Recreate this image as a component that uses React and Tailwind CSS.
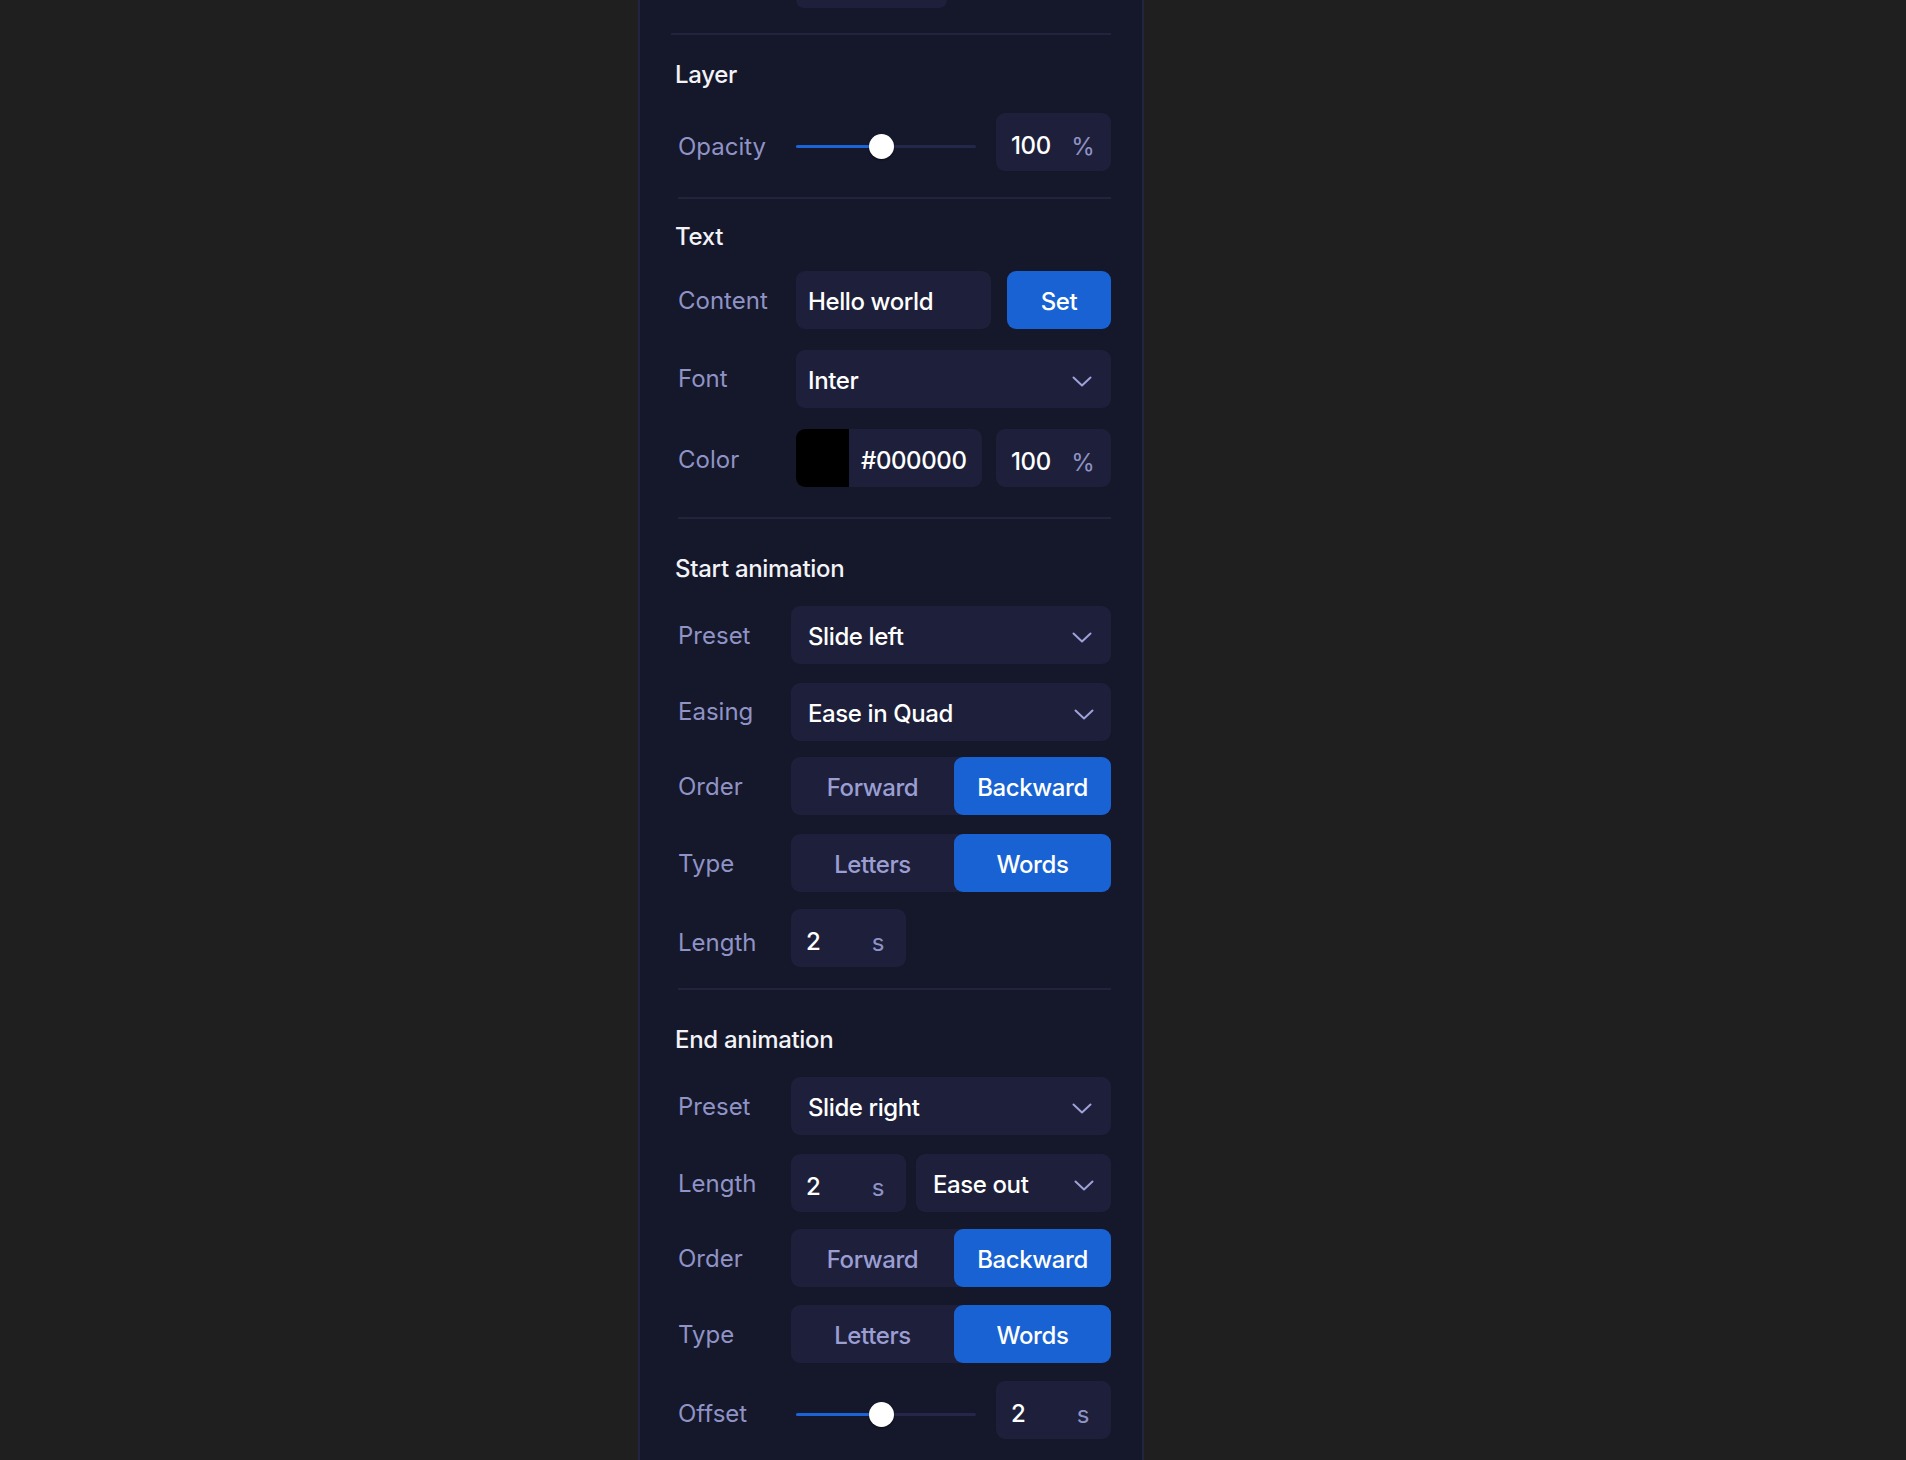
import React from "react";

const FONT = { fontFamily: "Inter, 'Noto Sans', sans-serif" };
const VAL = "text-[24px] font-medium leading-[32px] tracking-[-0.4px] text-white";

function Chevron({ className = "" }) {
  return (
    <svg width="20" height="11" viewBox="0 0 20 11" className={className} fill="none">
      <polyline points="1.5,1.5 10,9.5 18.5,1.5" stroke="#9ea2d8" strokeWidth="2" strokeLinecap="round" strokeLinejoin="round" />
    </svg>
  );
}

function Divider({ className = "" }) {
  return <div className={`h-[2px] shrink-0 bg-[#22243d] ${className}`} />;
}

function Heading({ children, className = "" }) {
  return (
    <div className={`h-[32px] shrink-0 pl-[2px] text-[24px] font-medium leading-[32px] tracking-[-0.3px] text-[#f3f3f7] ${className}`}>
      {children}
    </div>
  );
}

function Row({ label, labelW = "w-[123px]", labelShift = "translate-y-[1px]", className = "", children }) {
  return (
    <div className={`flex h-[58px] shrink-0 items-center ${className}`}>
      <div className={`${labelW} shrink-0 pl-[5px] text-[24px] leading-[32px] text-[#8f93c6] ${labelShift}`}>{label}</div>
      {children}
    </div>
  );
}

function NumberInput({ value, unit, className = "" }) {
  return (
    <div className={`flex h-[58px] w-[115px] shrink-0 items-center rounded-[9px] bg-[#1e1f3a] ${className}`}>
      <span className={`flex-1 translate-y-[4px] pl-[15px] ${VAL}`}>{value}</span>
      <span className="w-[56px] translate-y-[5px] text-center text-[24px] leading-[32px] text-[#8f93c6]">{unit}</span>
    </div>
  );
}

function Select({ value, className = "", pl = "pl-[12px]", pr = "pr-[19px]" }) {
  return (
    <div className={`flex h-[58px] items-center justify-between rounded-[9px] bg-[#1e1f3a] ${pl} ${pr} ${className}`}>
      <span className={`translate-y-[2px] ${VAL}`}>{value}</span>
      <Chevron className="translate-y-[2px]" />
    </div>
  );
}

function Segmented({ left, right }) {
  return (
    <div className="flex h-[58px] flex-1 rounded-[9px] bg-[#1e1f3a]">
      <div className="flex w-[163px] items-center justify-center text-[24px] font-medium leading-[32px] tracking-[-0.4px] text-[#9a9ed2]">
        <span className="translate-y-[2px]">{left}</span>
      </div>
      <div className={`flex flex-1 items-center justify-center rounded-[9px] bg-[#1862d3] ${VAL}`}>
        <span className="translate-y-[2px]">{right}</span>
      </div>
    </div>
  );
}

function Slider() {
  return (
    <div className="relative h-[25px] w-[200px] shrink-0 translate-y-[4px]">
      <div className="absolute left-0 top-[11px] h-[3px] w-[180px] rounded-full bg-[#24274a]" />
      <div className="absolute left-0 top-[11px] h-[3px] w-[86px] rounded-full bg-[#1b63d6]" />
      <div className="absolute left-[73px] top-0 h-[25px] w-[25px] rounded-full bg-white shadow-[0_1px_2px_rgba(0,0,0,0.45)]" />
    </div>
  );
}

export default function App() {
  return (
    <div className="h-[1460px] overflow-hidden bg-[#1f1f1f] pl-[638px]" style={FONT}>
      <div className="flex min-h-[1460px] w-[506px] flex-col border-x-2 border-[#22253f] bg-[#15172a] pl-[33px] pr-[31px]">
        <div className="ml-[123px] h-[8px] w-[151px] shrink-0 rounded-b-[9px] bg-[#1e1f3a]" />
        <Divider className="mt-[25px] -ml-[2px]" />

        <Heading className="mt-[24px]">Layer</Heading>
        <Row label="Opacity" labelShift="translate-y-[5px]" className="mt-[22px]">
          <Slider />
          <NumberInput value="100" unit="%" />
        </Row>

        <Divider className="mt-[26px] ml-[5px]" />

        <Heading className="mt-[22px]">Text</Heading>
        <Row label="Content" className="mt-[18px]">
          <div className={`flex h-[58px] w-[195px] shrink-0 items-center rounded-[9px] bg-[#1e1f3a] pl-[12px] ${VAL}`}>
            <span className="translate-y-[2px]">Hello world</span>
          </div>
          <div className={`ml-[16px] flex h-[58px] flex-1 items-center justify-center rounded-[9px] bg-[#1862d3] ${VAL}`}>
            <span className="translate-y-[2px]">Set</span>
          </div>
        </Row>
        <Row label="Font" labelShift="translate-y-[0px]" className="mt-[21px]">
          <Select value="Inter" className="flex-1" />
        </Row>
        <Row label="Color" labelShift="translate-y-[2px]" className="mt-[21px]">
          <div className="flex h-[58px] w-[186px] shrink-0 items-center overflow-hidden rounded-[9px] bg-[#1e1f3a]">
            <div className="h-full w-[53px] bg-black" />
            <span className={`translate-y-[3px] pl-[12px] ${VAL}`}>#000000</span>
          </div>
          <NumberInput value="100" unit="%" className="ml-[14px]" />
        </Row>

        <Divider className="mt-[30px] ml-[5px]" />

        <Heading className="mt-[34px]">Start animation</Heading>
        <Row label="Preset" labelW="w-[118px]" className="mt-[21px]">
          <Select value="Slide left" className="flex-1" pl="pl-[17px]" />
        </Row>
        <Row label="Easing" labelW="w-[118px]" labelShift="translate-y-[0px]" className="mt-[19px]">
          <Select value="Ease in Quad" className="flex-1" pl="pl-[17px]" pr="pr-[17px]" />
        </Row>
        <Row label="Order" labelW="w-[118px]" className="mt-[16px]">
          <Segmented left="Forward" right="Backward" />
        </Row>
        <Row label="Type" labelW="w-[118px]" className="mt-[19px]">
          <Segmented left="Letters" right="Words" />
        </Row>
        <Row label="Length" labelW="w-[118px]" labelShift="translate-y-[5px]" className="mt-[17px]">
          <NumberInput value="2" unit="s" />
        </Row>

        <Divider className="mt-[21px] ml-[5px]" />

        <Heading className="mt-[34px]">End animation</Heading>
        <Row label="Preset" labelW="w-[118px]" className="mt-[21px]">
          <Select value="Slide right" className="flex-1" pl="pl-[17px]" />
        </Row>
        <Row label="Length" labelW="w-[118px]" className="mt-[19px]">
          <NumberInput value="2" unit="s" />
          <Select value="Ease out" className="ml-[10px] flex-1" pl="pl-[17px]" pr="pr-[17px]" />
        </Row>
        <Row label="Order" labelW="w-[118px]" className="mt-[17px]">
          <Segmented left="Forward" right="Backward" />
        </Row>
        <Row label="Type" labelW="w-[118px]" className="mt-[18px]">
          <Segmented left="Letters" right="Words" />
        </Row>
        <Row label="Offset" labelShift="translate-y-[4px]" className="mt-[18px]">
          <Slider />
          <NumberInput value="2" unit="s" />
        </Row>
      </div>
    </div>
  );
}
